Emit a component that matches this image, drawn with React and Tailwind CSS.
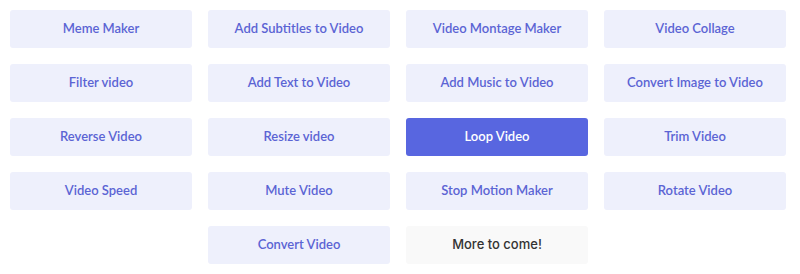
const tools = [
  'Meme Maker',
  'Add Subtitles to Video',
  'Video Montage Maker',
  'Video Collage',
  'Filter video',
  'Add Text to Video',
  'Add Music to Video',
  'Convert Image to Video',
  'Reverse Video',
  'Resize video',
  'Loop Video',
  'Trim Video',
  'Video Speed',
  'Mute Video',
  'Stop Motion Maker',
  'Rotate Video',
];

export default function App() {
  return (
    <div className="w-[800px] h-[274px] bg-white pl-[10px] pt-[10px]" style={{ fontFamily: 'Lato, "Noto Sans", sans-serif' }}>
      <div className="grid grid-cols-[repeat(4,182px)] gap-x-[16px] gap-y-[16px]">
        {tools.map((t) => (
          <a
            key={t}
            className={`h-[38px] flex items-center justify-center rounded-[3px] text-[13px] font-semibold ${
              t === 'Loop Video' ? 'bg-[#5866e0] text-white' : 'bg-[#eef0fc] text-[#5b64d4]'
            }`}
          >
            {t}
          </a>
        ))}
        <div />
        <a className="h-[38px] flex items-center justify-center rounded-[3px] text-[13px] font-semibold bg-[#eef0fc] text-[#5b64d4]">
          Convert Video
        </a>
        <div
          className="h-[38px] flex items-center justify-center rounded-[3px] text-[13px] font-medium bg-[#f9f9f9] text-[#333333]"
          style={{ fontFamily: 'Inter, sans-serif' }}
        >
          More to come!
        </div>
      </div>
    </div>
  );
}
